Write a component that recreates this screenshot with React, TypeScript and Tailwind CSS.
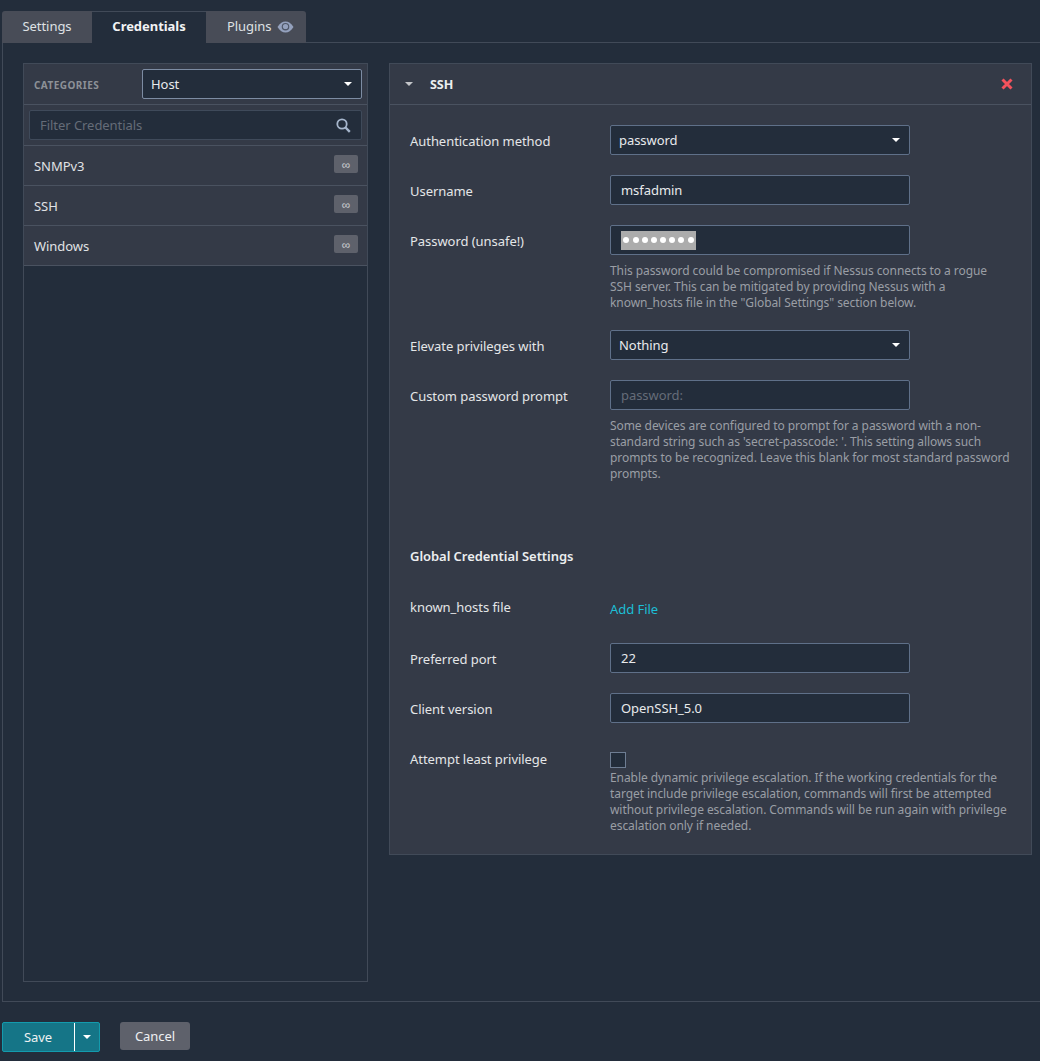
import type { ReactNode } from 'react';

const CREDENTIALS = ['SNMPv3', 'SSH', 'Windows'];

function Caret({ className }: { className: string }) {
  return <span className={`h-0 w-0 border-x-[4px] border-t-[4px] border-x-transparent ${className}`} />;
}

function Field({ value, select }: { value: string; select?: boolean }) {
  return (
    <div className="flex h-[30px] w-[300px] items-center justify-between rounded-[2px] border border-[#5f7089] bg-[#232d3b] pr-[9px] pl-[8px] text-[13px] text-[#e8eaec]">
      <span className={select ? 'pt-[1px]' : 'pt-[1px] pl-[2px]'}>{value}</span>
      {select && <Caret className="border-t-white" />}
    </div>
  );
}

function Row({ label, mt, children }: { label: string; mt: string; children: ReactNode }) {
  return (
    <div className={`flex ${mt}`}>
      <div className="w-[200px] shrink-0 pt-[7px] text-[13px] leading-[18px] text-[#e4e6e8]">{label}</div>
      <div>{children}</div>
    </div>
  );
}

function Help({ children, mt }: { children: ReactNode; mt: string }) {
  return <p className={`${mt} w-[401px] text-[12px] leading-[16px] tracking-[-0.07px] text-[#9a9ea5]`}>{children}</p>;
}

export default function App() {
  return (
    <div className="relative h-[1061px] w-[1040px] overflow-hidden bg-[#232d3b] font-['Open_Sans',sans-serif] tracking-[-0.05px]">
      <div className="absolute top-[42px] left-[2px] h-[960px] w-[1060px] border border-[#414a58]" />

      <div className="absolute top-[11px] left-[2px] flex h-[32px] text-[13px]">
        <div className="flex w-[90px] items-center justify-center rounded-tl-[3px] bg-[#484c57] pb-[1px] text-[#dfe1e4]">Settings</div>
        <div className="flex h-[33px] w-[114px] items-center justify-center border-t border-[#414a58] bg-[#232d3b] pb-[2px] font-bold text-[#f2f3f4]">Credentials</div>
        <div className="flex w-[100px] items-center gap-[5px] rounded-tr-[3px] bg-[#484c57] pb-[1px] pl-[21px] text-[#dfe1e4]">
          Plugins
          <svg width="17" height="12" viewBox="0 0 17 12">
            <path d="M0.5 6C3 2 5.5 0.5 8.5 0.5S14 2 16.5 6C14 10 11.500 11.500 8.500 11.500S3 10 0.500 6Z" fill="#94a1bd" />
            <circle cx="8.500" cy="5.800" r="3.800" fill="#4f5768" />
            <circle cx="8.500" cy="5.500" r="2.600" fill="#94a1bd" />
          </svg>
        </div>
      </div>

      <aside className="absolute top-[63px] left-[23px] h-[919px] w-[345px] border border-[#414a58]">
        <div className="bg-[#343a47]">
          <div className="flex h-[41px] items-center justify-between border-b border-[#4a5260] pr-[5px] pl-[10px]">
            <span className="pt-[2px] text-[10px] font-bold tracking-[0.45px] text-[#8d9197]">CATEGORIES</span>
            <div className="flex h-[30px] w-[220px] items-center justify-between rounded-[2px] border border-[#7d8ca3] bg-[#232d3b] pr-[9px] pl-[8px] text-[13px] text-[#e8eaec]">
              <span className="pt-[1px]">Host</span>
              <Caret className="border-t-white" />
            </div>
          </div>
          <div className="flex h-[41px] items-center border-b border-[#4a5260] px-[5px]">
            <div className="flex h-[30px] w-[334px] items-center justify-between rounded-[2px] border border-[#3f4a5a] bg-[#232d3b] pr-[10px] pl-[10px] text-[13px] text-[#656c78]">
              <span className="pt-[1px]">Filter Credentials</span>
              <svg width="15" height="15" viewBox="0 0 15 15" fill="none" stroke="#a6b6cc">
                <circle cx="6" cy="6" r="4.700" strokeWidth="1.800" />
                <path d="M9.500 9.500 13.800 13.800" strokeWidth="2.400" />
              </svg>
            </div>
          </div>
          {CREDENTIALS.map((name) => (
            <div key={name} className="relative flex h-[40px] items-center border-b border-[#4a5260] pt-[2px] pl-[10px] text-[13px] text-[#e0e2e5]">
              {name}
              <span className="absolute top-[9px] right-[9px] flex h-[18px] w-[24px] items-center justify-center rounded-[2px] bg-[#5e616b] pt-[2px] text-[12px] leading-none text-[#c9cbd0]">
                ∞
              </span>
            </div>
          ))}
        </div>
      </aside>

      <section className="absolute top-[63px] left-[389px] h-[792px] w-[643px] border border-[#414a58] bg-[#343a47]">
        <div className="flex h-[41px] items-center justify-between border-b border-[#4a5260] pr-[18px] pl-[15px]">
          <div className="flex items-center gap-[17px]">
            <Caret className="border-t-[#c3c5c9]" />
            <span className="pt-[2px] text-[12.5px] font-bold text-[#eceef0]">SSH</span>
          </div>
          <svg width="12" height="12" viewBox="0 0 12 12">
            <path d="M1.500 1.500 10.500 10.500M10.500 1.500 1.500 10.500" stroke="#f4525c" strokeWidth="3" />
          </svg>
        </div>

        <div className="pl-[20px]">
          <Row label="Authentication method" mt="mt-[20px]">
            <Field value="password" select />
          </Row>
          <Row label="Username" mt="mt-[20px]">
            <Field value="msfadmin" />
          </Row>
          <Row label="Password (unsafe!)" mt="mt-[20px]">
            <div className="flex h-[30px] w-[300px] items-center rounded-[2px] border border-[#5f7089] bg-[#232d3b] pl-[10px]">
              <span className="flex h-[19px] w-[75px] items-center justify-center gap-[3.2px] bg-[#acacac]">
                {[0, 1, 2, 3, 4, 5, 6, 7].map((i) => (
                  <span key={i} className="h-[6px] w-[6px] rounded-full bg-white" />
                ))}
              </span>
            </div>
            <Help mt="mt-[8px]">
              This password could be compromised if Nessus connects to a rogue SSH server. This can be mitigated by providing Nessus with a known_hosts file in the "Global Settings" section below.
            </Help>
          </Row>
          <Row label="Elevate privileges with" mt="mt-[19px]">
            <Field value="Nothing" select />
          </Row>
          <Row label="Custom password prompt" mt="mt-[20px]">
            <div className="flex h-[30px] w-[300px] items-center rounded-[2px] border border-[#5f7089] bg-[#232d3b] pl-[10px] text-[13px] text-[#656c78]">
              <span className="pt-[1px]">password:</span>
            </div>
            <Help mt="mt-[8px]">
              Some devices are configured to prompt for a password with a non-standard string such as 'secret-passcode: '. This setting allows such prompts to be recognized. Leave this blank for most standard password prompts.
            </Help>
          </Row>

          <h3 className="mt-[65px] text-[13px] leading-[18px] font-semibold text-[#eceef0]">Global Credential Settings</h3>

          <div className="mt-[33px] flex">
            <div className="w-[200px] text-[13px] leading-[18px] text-[#e4e6e8]">known_hosts file</div>
            <span className="pt-[2px] text-[13px] leading-[18px] text-[#1cbfd6]">Add File</span>
          </div>

          <Row label="Preferred port" mt="mt-[25px]">
            <Field value="22" />
          </Row>
          <Row label="Client version" mt="mt-[20px]">
            <Field value="OpenSSH_5.0" />
          </Row>

          <div className="mt-[27px] flex">
            <div className="w-[200px] text-[13px] leading-[18px] text-[#e4e6e8]">Attempt least privilege</div>
            <div>
              <div className="mt-[2px] h-[16px] w-[16px] border border-[#6e7d93] bg-[#232d3b]" />
              <Help mt="mt-[2px]">
                Enable dynamic privilege escalation. If the working credentials for the target include privilege escalation, commands will first be attempted without privilege escalation. Commands will be run again with privilege escalation only if needed.
              </Help>
            </div>
          </div>
        </div>
      </section>

      <div className="absolute top-[1022px] left-[2px] flex h-[30px] w-[98px] rounded-[2px] border border-[#139bad] bg-[#157587] text-[13px] text-[#eef1f2]">
        <div className="flex w-[72px] items-center justify-center border-r border-white pt-[1px] pr-[1px]">Save</div>
        <div className="flex flex-1 items-center justify-center pr-[1px]">
          <Caret className="border-t-white" />
        </div>
      </div>
      <div className="absolute top-[1022px] left-[120px] flex h-[28px] w-[70px] items-center justify-center rounded-[3px] bg-[#5e616b] pt-[1px] text-[13px] text-[#eef0f2]">
        Cancel
      </div>
    </div>
  );
}
